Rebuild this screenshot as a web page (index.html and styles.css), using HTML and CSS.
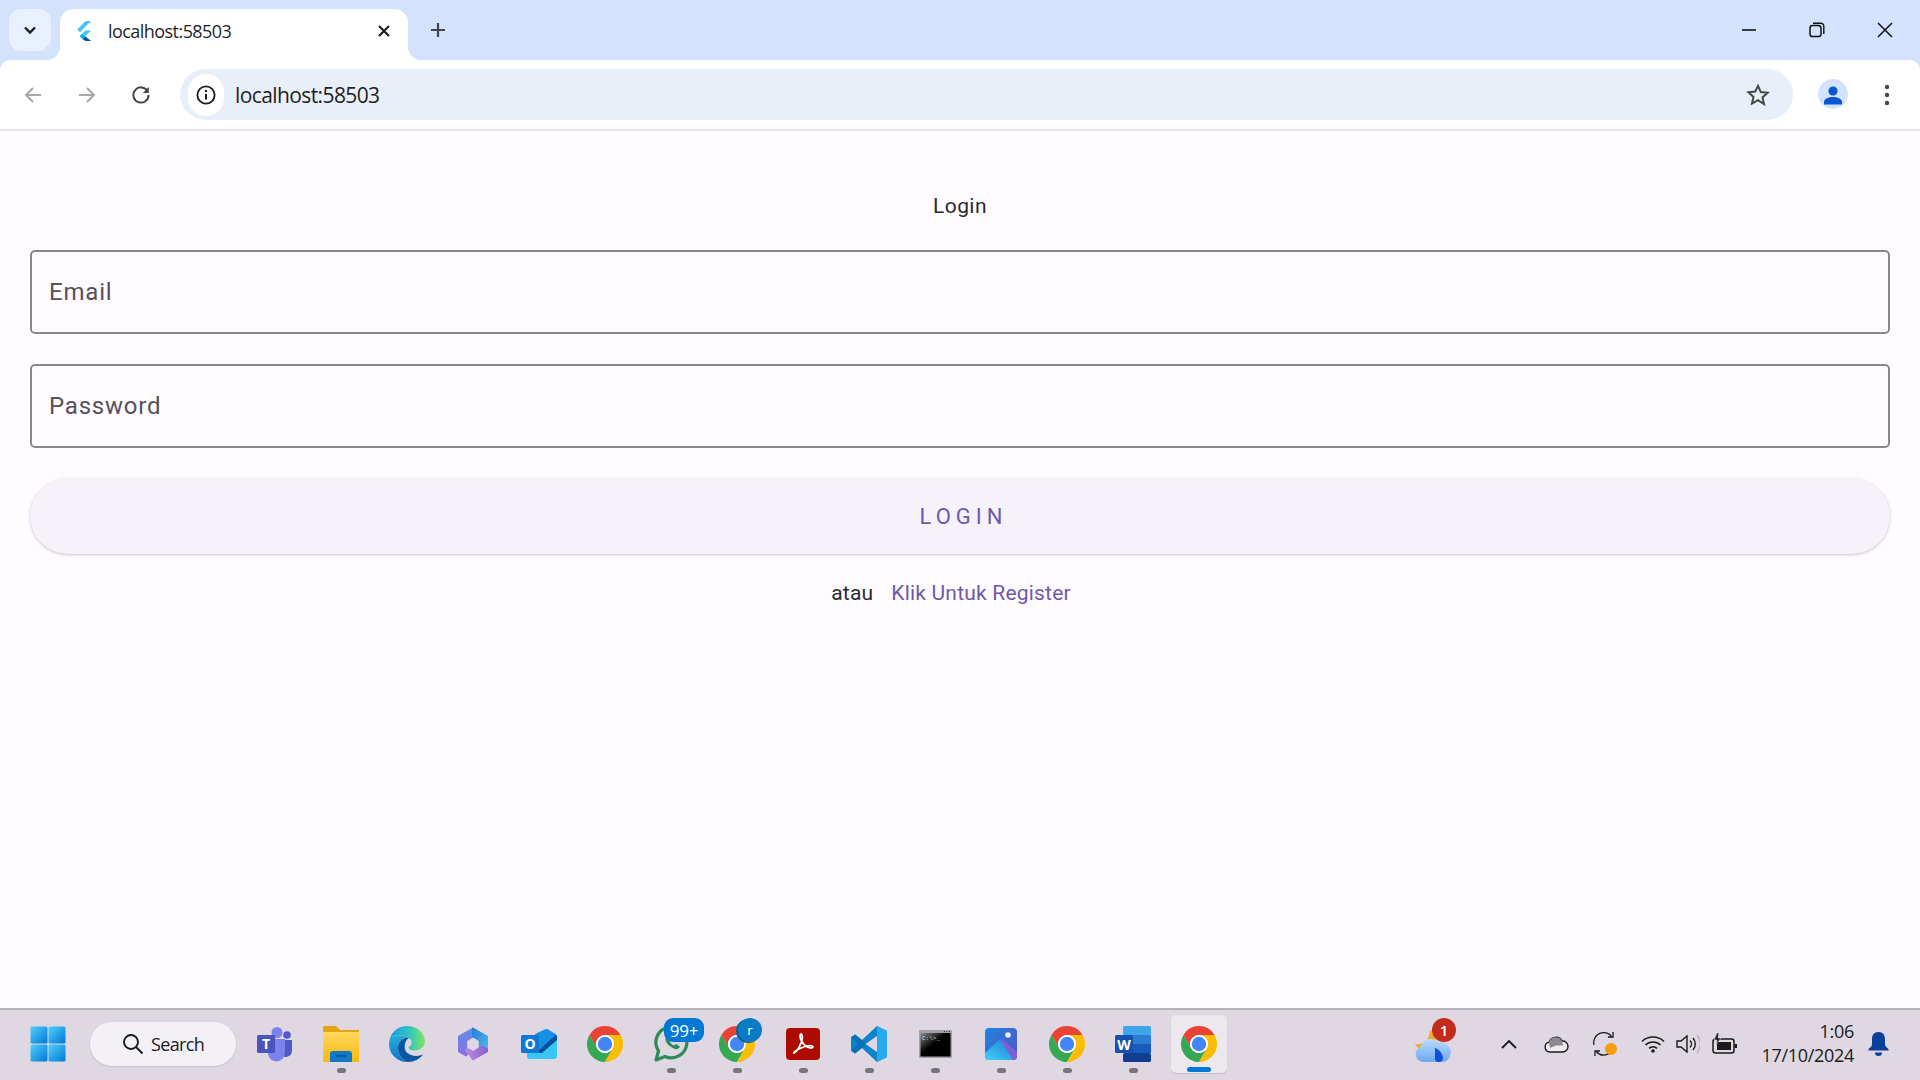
FILE: index.html
```html
<!DOCTYPE html>
<html lang="id">
<head>
<meta charset="utf-8">
<title>localhost:58503</title>
<link rel="stylesheet" href="styles.css">
</head>
<body>
<svg class="defs" width="0" height="0" aria-hidden="true">
  <defs>
    <symbol id="chrome" viewBox="4 4 40 40">
      <path fill="#ea4335" d="M24 4A20 20 0 0 1 41.32 14H24A10 10 0 0 0 15.34 29L6.68 14A20 20 0 0 1 24 4z"/>
      <path fill="#34a853" d="M6.68 14L15.34 29A10 10 0 0 0 32.66 29L24 44A20 20 0 0 1 6.68 14z"/>
      <path fill="#fbbc04" d="M41.32 14H24A10 10 0 0 1 32.66 29L24 44A20 20 0 0 0 41.32 14z"/>
      <circle cx="24" cy="24" r="10" fill="#fff"/>
      <circle cx="24" cy="24" r="8" fill="#4285f4"/>
    </symbol>
    <linearGradient id="winGrad" x1="0" y1="0" x2="1" y2="1">
      <stop offset="0" stop-color="#4fd0ff"/><stop offset="1" stop-color="#0078d4"/>
    </linearGradient>
    <linearGradient id="folderGrad" x1="0" y1="0" x2="0" y2="1">
      <stop offset="0" stop-color="#ffd75e"/><stop offset="1" stop-color="#fbb90f"/>
    </linearGradient>
    <linearGradient id="edgeTop" x1="0" y1="0" x2="1" y2="0">
      <stop offset="0" stop-color="#1c9bd8"/><stop offset=".55" stop-color="#2fc6c4"/><stop offset="1" stop-color="#82e55f"/>
    </linearGradient>
    <linearGradient id="edgeLeft" x1="0" y1="0" x2="0" y2="1">
      <stop offset="0" stop-color="#22b0d8"/><stop offset="1" stop-color="#0d74c8"/>
    </linearGradient>
    <linearGradient id="mLeft" x1="0" y1="0" x2="0" y2="1">
      <stop offset="0" stop-color="#5f8fe6"/><stop offset="1" stop-color="#8a6fdc"/>
    </linearGradient>
    <linearGradient id="mTop" x1="0" y1="0" x2="1" y2="1">
      <stop offset="0" stop-color="#2b7fd8"/><stop offset="1" stop-color="#4fb6e8"/>
    </linearGradient>
    <linearGradient id="mBottom" x1="0" y1="0" x2="1" y2="0">
      <stop offset="0" stop-color="#b88ae6"/><stop offset="1" stop-color="#8a5fd0"/>
    </linearGradient>
    <linearGradient id="photoGrad" x1="0" y1="0" x2="1" y2="1">
      <stop offset="0" stop-color="#1c86e0"/><stop offset="1" stop-color="#5a4fc0"/>
    </linearGradient>
    <linearGradient id="peakGrad" x1="0" y1="1" x2="1" y2="0">
      <stop offset="0" stop-color="#40d0f8"/><stop offset="1" stop-color="#1f7fdc"/>
    </linearGradient>
    <linearGradient id="cloudGrad" x1="0" y1="0" x2="0" y2="1">
      <stop offset="0" stop-color="#b9dcfb"/><stop offset="1" stop-color="#6fa8ee"/>
    </linearGradient>
    <linearGradient id="shine" x1="0" y1="0" x2="1" y2="1">
      <stop offset="0" stop-color="#8a8a8a"/><stop offset=".45" stop-color="#000"/>
    </linearGradient>
  </defs>
</svg>
<div class="window">
  <header class="tabstrip">
    <button class="tab-switch" aria-label="Search tabs">
      <svg width="14" height="9" viewBox="0 0 14 9"><path d="M2 1.500l5 5 5-5" fill="none" stroke="#1f1f1f" stroke-width="2.400"/></svg>
    </button>
    <div class="tab">
      <svg class="tab-fav" width="16" height="20" viewBox="0 0 16 20">
        <path fill="#47c5fb" d="M9.500 0h5.600L4 11.200 1.200 8.400z"/>
        <path fill="#47c5fb" d="M9.500 9.400h5.600L9.200 15.200 6.400 12.400z"/>
        <path fill="#00569e" d="M6.400 18l2.800-2.800 5.900 4.800H9.500z"/>
        <path fill="#00b5f8" d="M6.400 12.400l2.800 2.800-2.800 2.800-2.800-2.800z"/>
      </svg>
      <span class="tab-title">localhost:58503</span>
      <svg class="tab-close" width="14" height="14" viewBox="0 0 14 14"><path d="M2 2l10 10M12 2L2 12" stroke="#1f1f1f" stroke-width="2.200"/></svg>
    </div>
    <svg class="new-tab" width="18" height="18" viewBox="0 0 18 18"><path d="M9 2v14M2 9h14" stroke="#444746" stroke-width="2.200"/></svg>
    <div class="win-controls">
      <svg width="16" height="16" viewBox="0 0 16 16"><path d="M1 8h14" stroke="#111" stroke-width="1.600"/></svg>
      <svg width="16" height="16" viewBox="0 0 16 16"><rect x="1" y="3.600" width="11" height="11" rx="2.600" fill="none" stroke="#111" stroke-width="1.500"/><path d="M4 1.200h7.600A3 3 0 0 1 14.800 4.400V12" fill="none" stroke="#111" stroke-width="1.400"/></svg>
      <svg width="16" height="16" viewBox="0 0 16 16"><path d="M1 1l14 14M15 1L1 15" stroke="#111" stroke-width="1.500"/></svg>
    </div>
  </header>

  <nav class="toolbar">
    <svg class="tool-btn" width="20" height="20" viewBox="0 0 20 20"><path d="M18 10H3M10 3l-7 7 7 7" fill="none" stroke="#a7a8aa" stroke-width="2"/></svg>
    <svg class="tool-btn" width="20" height="20" viewBox="0 0 20 20"><path d="M2 10h15M10 3l7 7-7 7" fill="none" stroke="#a7a8aa" stroke-width="2"/></svg>
    <svg class="tool-btn" width="20" height="20" viewBox="0 0 20 20"><path d="M16.600 6.200A7.600 7.600 0 1 0 17.600 10" fill="none" stroke="#474747" stroke-width="2"/><path d="M17.800 2v6h-6z" fill="#474747"/></svg>
    <div class="omnibox">
      <span class="site-info">
        <svg width="20" height="20" viewBox="0 0 20 20"><circle cx="10" cy="10" r="8.600" fill="none" stroke="#1f1f1f" stroke-width="1.900"/><path d="M10 9v5.600" stroke="#1f1f1f" stroke-width="2"/><circle cx="10" cy="6" r="1.200" fill="#1f1f1f"/></svg>
      </span>
      <span class="url">localhost:58503</span>
      <svg class="star" width="24" height="24" viewBox="0 0 24 24"><path d="M12 2.800l2.800 6.300 6.800.7-5.100 4.600 1.500 6.700L12 17.100l-6 3.500 1.500-6.700-5.100-4.600 6.800-.7z" fill="none" stroke="#474747" stroke-width="2"/></svg>
    </div>
    <span class="avatar">
      <svg width="20" height="20" viewBox="0 0 20 20"><circle cx="10" cy="6" r="4.600" fill="#0b57d0"/><path d="M1 19.500v-2.600C1 13.600 6 12 10 12s9 1.600 9 4.900v2.600z" fill="#0b57d0"/></svg>
    </span>
    <svg class="menu-dots" width="6" height="22" viewBox="0 0 6 22"><circle cx="3" cy="3" r="2.200" fill="#474747"/><circle cx="3" cy="11" r="2.200" fill="#474747"/><circle cx="3" cy="19" r="2.200" fill="#474747"/></svg>
  </nav>

  <main class="page">
    <h1 class="page-title">Login</h1>
    <div class="field"><span class="field-label">Email</span></div>
    <div class="field"><span class="field-label">Password</span></div>
    <button class="login-btn">LOGIN</button>
    <div class="alt-row">
      <span class="alt-text">atau</span>
      <a class="alt-link">Klik Untuk Register</a>
    </div>
  </main>

  <footer class="taskbar">
    <div class="slot">
      <svg width="36" height="36" viewBox="0 0 36 36"><rect x="0.500" y="0.500" width="17" height="17" rx="1.500" fill="url(#winGrad)"/><rect x="18.500" y="0.500" width="17" height="17" rx="1.500" fill="url(#winGrad)"/><rect x="0.500" y="18.500" width="17" height="17" rx="1.500" fill="url(#winGrad)"/><rect x="18.500" y="18.500" width="17" height="17" rx="1.500" fill="url(#winGrad)"/></svg>
    </div>
    <div class="search-pill">
      <svg width="22" height="22" viewBox="0 0 22 22"><circle cx="9" cy="9" r="7" fill="none" stroke="#1a1a1a" stroke-width="1.900"/><path d="M14 14l6.500 6.500" stroke="#1a1a1a" stroke-width="2"/></svg>
      <span>Search</span>
    </div>
    <div class="apps">
      <div class="slot">
        <svg width="36" height="36" viewBox="0 0 36 36"><circle cx="20" cy="6.500" r="5.500" fill="#7b83eb"/><circle cx="30" cy="9" r="3.800" fill="#5059c9"/><path d="M23 14h12v11a6.500 6.500 0 0 1-12 3z" fill="#5059c9"/><path d="M11 13h17v14a8.500 8.500 0 0 1-17 0z" fill="#7b83eb"/><rect x="0" y="9" width="18" height="18" rx="1.500" fill="#4b53bc"/><text x="9" y="23" class="svg-t">T</text></svg>
      </div>
      <div class="slot has-dot">
        <svg width="36" height="36" viewBox="0 0 36 36"><path d="M0 2a2 2 0 0 1 2-2h11l4 4H36v8H0z" fill="#e2a50c"/><path d="M0 6h36v30H0z" fill="url(#folderGrad)"/><path d="M7 28a3 3 0 0 1 3-3h16a3 3 0 0 1 3 3v8H7z" fill="#0f78c8"/><path d="M13 30h10" stroke="#0b4f8c" stroke-width="1.500"/></svg>
      </div>
      <div class="slot">
        <svg width="36" height="36" viewBox="0 0 36 36">
          <path d="M1 12A18 18 0 0 1 18 0C28 0 36 7 36 15.500C36 21 31 24.500 26 24.500C22 24.500 19.500 23 19.500 21C23 20 24 15 20 12C14 8 5 9 1 12z" fill="url(#edgeTop)"/>
          <path d="M1 12C5 9 14 8 20 12C14 11 9 16 9 22C9 29 14 35 19 36A18 18 0 0 1 0 18C0 16 .4 14 1 12z" fill="url(#edgeLeft)"/>
          <path d="M20 12C14 11 9 16 9 22C9 29 14 35 19 36C25 36 31 33 34 28.500C31 30 26 30.500 22 29C16 27 15 22 16 18C16.500 15 18 13 20 12z" fill="#0b56a0"/>
        </svg>
      </div>
      <div class="slot">
        <svg width="32" height="34" viewBox="0 0 32 34">
          <path d="M16 1.500L2 9.500V24.500L9 28.500L16 17z" fill="url(#mLeft)" stroke="url(#mLeft)" stroke-width="2" stroke-linejoin="round"/>
          <path d="M16 1.500L30 9.500V22L16 17z" fill="url(#mTop)" stroke="url(#mTop)" stroke-width="2" stroke-linejoin="round"/>
          <path d="M9 23L16 17L30 22V24.500L16 32.500z" fill="url(#mBottom)" stroke="url(#mBottom)" stroke-width="2" stroke-linejoin="round"/>
          <path d="M16 11.500L21 14.500V20L16 23L11 20V14.500z" fill="#dfd8e2" stroke="#dfd8e2" stroke-width="1.500" stroke-linejoin="round"/>
        </svg>
      </div>
      <div class="slot">
        <svg width="36" height="30" viewBox="0 0 36 30">
          <path d="M15 5L24 .6C25 0 26 0 27 .6L34.500 5C35.500 5.700 36 7 36 8V27a3 3 0 0 1-3 3H9a3 3 0 0 1-3-3V20z" fill="#38c6f4"/>
          <path d="M14 5L25 0 27 .6 35 5.500 18 21H14z" fill="#1590e6"/>
          <path d="M18 21L35 5.500C35.700 6.400 36 7.500 36 8.500V11L21 24H18z" fill="#0a4f9e"/>
          <rect x="0" y="6" width="18" height="18" rx="1.500" fill="#0f78d4"/>
          <text x="9" y="20" class="svg-t">O</text>
        </svg>
      </div>
      <div class="slot"><svg width="36" height="36"><use href="#chrome"/></svg></div>
      <div class="slot has-dot">
        <svg width="37" height="36" viewBox="0 0 37 36"><path d="M3 34l2.500-9A15.500 15.500 0 1 1 12 30.500z" fill="none" stroke="#2e8b57" stroke-width="3.200" stroke-linejoin="round"/><path d="M13 11c-2 3 1 9 9 12 2 .7 4-.5 5-2.500l-4-2.500-2 1.500c-2-1-3.500-2.500-4.500-4.500l1.500-2-2-3.500z" fill="#2e8b57"/></svg>
        <span class="badge badge-count">99+</span>
      </div>
      <div class="slot has-dot">
        <svg width="36" height="36"><use href="#chrome"/></svg>
        <span class="badge badge-r">r</span>
      </div>
      <div class="slot has-dot">
        <svg width="34" height="32" viewBox="0 0 34 32"><rect width="34" height="32" rx="4" fill="#ad0b00"/><path d="M8 25c3-1 6-7 8-13 .8-3 0-6-1-6s-1.500 3 0 6c2 4 6 8 10 8 2 0 2.500-1.500 1-2-3-1-10 1-15 4-2 1.500-4 3-3 3z" fill="none" stroke="#fff" stroke-width="1.800"/></svg>
      </div>
      <div class="slot has-dot">
        <svg width="36" height="36" viewBox="0 0 36 36"><path d="M26 0l10 5v26l-10 5-15-14-7 5.500-4-3V11l4-2.500 7 5.500z" fill="#0b84ce"/><path d="M26 0l10 5v26l-10 5z" fill="#27aaf0"/><path d="M26 10L14.500 18 26 26z" fill="#dfd8e2"/><path d="M11 14l4 4-4 4-7 5.500-4-3 7-6.500-7-6.500 4-3z" fill="#0a70b8"/></svg>
      </div>
      <div class="slot has-dot">
        <svg width="33" height="28" viewBox="0 0 33 28"><rect width="33" height="28" rx="1" fill="#a2a2a6"/><rect x="1.500" y="3" width="30" height="23.500" fill="url(#shine)"/><path d="M25 1.500h1M27.500 1.500h1M30 1.500h1" stroke="#333" stroke-width="1"/><text x="3" y="10" class="svg-cmd">C:\&gt;_</text></svg>
      </div>
      <div class="slot has-dot">
        <svg width="32" height="32" viewBox="0 0 32 32"><rect width="32" height="32" rx="4" fill="url(#photoGrad)"/><circle cx="23" cy="7" r="2.800" fill="#e8eefc"/><path d="M15 12c1-1 2-1 3 0L32 24v4a4 4 0 0 1-4 4H20z" fill="#7f5fd4"/><path d="M0 25L13 13c1-1 2-1 3 0L28 32H4a4 4 0 0 1-4-4z" fill="url(#peakGrad)"/></svg>
      </div>
      <div class="slot has-dot"><svg width="36" height="36"><use href="#chrome"/></svg></div>
      <div class="slot has-dot">
        <svg width="36" height="36" viewBox="0 0 36 36"><rect x="8" y="0" width="28" height="9" rx="1.500" fill="#41a5ee"/><rect x="8" y="9" width="28" height="9" fill="#2b7cd3"/><rect x="8" y="18" width="28" height="9" fill="#185abd"/><rect x="8" y="27" width="28" height="9" rx="1.500" fill="#103f91"/><rect x="0" y="9" width="18" height="18" rx="1.500" fill="#1552ad"/><text x="9" y="23.500" class="svg-t">W</text></svg>
      </div>
      <div class="slot active">
        <svg width="36" height="36"><use href="#chrome"/></svg>
      </div>
    </div>

    <div class="tray">
      <div class="weather">
        <svg width="36" height="38" viewBox="0 0 36 38">
          <path d="M0 19C8 21 15 14 15 5C20 8 22 14 20 20L12 25C7 26 2 23 0 19z" fill="#f5ab2a"/>
          <path d="M8 37a8 8 0 0 1-2-15.500C7 16 12 13 17 14C20 14.500 23 16 24 18C26 16 31 17 33 21C36 23 36.500 28 35 31C33.500 35 30 37 27 37z" fill="url(#cloudGrad)"/>
          <path d="M20 23C24 24 28 29 28 33C28 36 25 37.500 23 37C21 37 20 35 20 34z" fill="#0f4fe0"/>
        </svg>
        <span class="badge badge-one">1</span>
      </div>
      <svg class="tray-chev" width="16" height="10" viewBox="0 0 16 10"><path d="M1 9l7-7 7 7" fill="none" stroke="#1a1a1a" stroke-width="1.800"/></svg>
      <svg class="tray-cloud" width="25" height="17" viewBox="0 0 25 17"><path d="M6 16a5 5 0 0 1-.8-9.900A7 7 0 0 1 18 5a5.500 5.500 0 0 1 1 11z" fill="#f2eff3" stroke="#1a1a1a" stroke-width="1.400"/><path d="M5 6.500A7 7 0 0 1 18 5l1 4.500H12L6 12z" fill="#8d8a8e"/></svg>
      <svg class="tray-sync" width="24" height="26" viewBox="0 0 24 26"><path d="M1 14A10 10 0 0 1 19 6M15 6h5V1" fill="none" stroke="#1a1a1a" stroke-width="1.300"/><path d="M21 14a10 10 0 0 1-18 6M7 20H2v5" fill="none" stroke="#1a1a1a" stroke-width="1.300"/><circle cx="18" cy="18" r="6" fill="#f59d0e"/></svg>
      <svg class="tray-wifi" width="24" height="18" viewBox="0 0 24 18"><path d="M1 6.500a16 16 0 0 1 22 0M4.500 10a11 11 0 0 1 15 0M8 13.400a6 6 0 0 1 8 0" fill="none" stroke="#1a1a1a" stroke-width="1.500"/><circle cx="12" cy="16" r="1.800" fill="#1a1a1a"/></svg>
      <svg class="tray-vol" width="24" height="20" viewBox="0 0 24 20"><path d="M1 7h4l6-5v16l-6-5H1z" fill="none" stroke="#1a1a1a" stroke-width="1.400"/><path d="M14 6.500a5 5 0 0 1 0 7M17 4a9 9 0 0 1 0 12" fill="none" stroke="#1a1a1a" stroke-width="1.400"/><path d="M21 1a14 14 0 0 1 0 18" fill="none" stroke="#b5b0b8" stroke-width="1.200"/></svg>
      <svg class="tray-batt" width="25" height="22" viewBox="0 0 25 22"><rect x="1" y="6" width="21" height="14" rx="2.500" fill="none" stroke="#1a1a1a" stroke-width="1.500"/><rect x="5" y="9" width="14" height="8" fill="#1a1a1a"/><rect x="22.500" y="11" width="2.500" height="4" fill="#1a1a1a"/><path d="M5 0L2 7h3l-1 5 5-7H6l1-5z" fill="#1a1a1a" stroke="#dfd8e2" stroke-width=".6"/></svg>
      <div class="clock"><span>1:06</span><span>17/10/2024</span></div>
      <svg class="tray-bell" width="21" height="24" viewBox="0 0 21 24"><path d="M10.500 0C6 0 4 3 4 7v5c0 2-1.500 3.500-3.500 5v1.500h20V17c-2-1.500-3.500-3-3.500-5V7c0-4-2-7-6.500-7z" fill="#0a3f9c"/><path d="M7 20.500h7a3.500 3.500 0 0 1-7 0z" fill="#0a3f9c"/></svg>
    </div>
  </footer>
</div>
</body>
</html>
```

FILE: styles.css
```css
* { box-sizing: border-box; }
html, body { margin: 0; padding: 0; height: 100%; overflow: hidden; }
.defs { position: absolute; }

.window {
  width: 1920px;
  height: 1080px;
  display: flex;
  flex-direction: column;
  background: #d3e3fd;
  font-family: "Open Sans", "Noto Sans", sans-serif;
}

/* Tab strip */
.tabstrip {
  height: 60px;
  flex: none;
  display: flex;
  align-items: flex-start;
  padding: 9px 0 0 9px;
  background: #d3e3fd;
}
.tab-switch {
  width: 42px;
  height: 42px;
  border: 0;
  padding: 0;
  border-radius: 12px;
  background: #e9f0fd;
  display: flex;
  align-items: center;
  justify-content: center;
}
.tab {
  position: relative;
  width: 348px;
  height: 51px;
  margin-left: 9px;
  background: #fff;
  border-radius: 14px 14px 0 0;
  display: flex;
  align-items: center;
  padding: 0 17px 8px 16px;
}
.tab::before, .tab::after {
  content: "";
  position: absolute;
  bottom: 0;
  width: 14px;
  height: 14px;
}
.tab::before { left: -14px; background: radial-gradient(circle at 0 0, #d3e3fd 14px, #fff 14.5px); }
.tab::after { right: -14px; background: radial-gradient(circle at 100% 0, #d3e3fd 14px, #fff 14.5px); }
.tab-fav { flex: none; }
.tab-title {
  margin-left: 16px;
  flex: 1;
  font-size: 18px;
  letter-spacing: -0.55px;
  color: #1f1f1f;
}
.new-tab { margin: 12px 0 0 21px; }
.win-controls {
  margin-left: auto;
  margin-top: 13px;
  display: flex;
  gap: 52px;
  padding-right: 27px;
}
.win-controls svg { display: block; }

/* Toolbar */
.toolbar {
  height: 71px;
  flex: none;
  display: flex;
  align-items: flex-start;
  padding: 9px 30px 0 0;
  background: #fff;
  border-bottom: 2px solid #e3e3e3;
  border-radius: 10px 10px 0 0;
}
.tool-btn { flex: none; margin: 16px 0 0 23px; }
.toolbar .tool-btn + .tool-btn { margin-left: 34px; }
.omnibox {
  flex: 1;
  height: 51px;
  margin-left: 29px;
  border-radius: 26px;
  background: #e9eff9;
  display: flex;
  align-items: center;
  padding: 0 23px 0 8px;
}
.site-info {
  width: 36px;
  height: 42px;
  border-radius: 21px;
  background: #fff;
  display: flex;
  align-items: center;
  justify-content: center;
}
.url {
  margin-left: 11px;
  flex: 1;
  font-size: 21px;
  letter-spacing: -0.6px;
  color: #1f1f1f;
}
.avatar {
  width: 30px;
  height: 30px;
  margin: 10px 0 0 25px;
  border-radius: 50%;
  background: #d3e3fd;
  display: flex;
  align-items: center;
  justify-content: center;
  overflow: hidden;
}
.avatar svg { margin-top: 2px; }
.menu-dots { margin: 15px 0 0 36px; flex: none; }

/* Page */
.page {
  flex: 1;
  display: flex;
  flex-direction: column;
  padding: 60px 30px 0;
  background: #fffbff;
  font-family: Roboto, sans-serif;
}
.page-title {
  margin: 0 0 29px;
  height: 30px;
  line-height: 30px;
  text-align: center;
  font-size: 21px;
  font-weight: 400;
  letter-spacing: 0.4px;
  color: #2b292f;
}
.field {
  height: 84px;
  margin-bottom: 30px;
  border: 2px solid #8b8790;
  border-radius: 5px;
  display: flex;
  align-items: center;
  padding-left: 17px;
}
.field-label {
  font-size: 24px;
  letter-spacing: 0.8px;
  color: #55515b;
}
.login-btn {
  height: 76px;
  flex: none;
  border: 0;
  padding: 0 0 0 7px;
  border-radius: 38px;
  background: #f6f2f9;
  box-shadow: 0 1px 3px rgba(0, 0, 0, 0.22);
  font-family: Roboto, sans-serif;
  font-size: 22px;
  letter-spacing: 5px;
  color: #6f59ab;
}
.alt-row {
  margin-top: 24px;
  height: 30px;
  display: flex;
  justify-content: center;
  align-items: center;
  gap: 18px;
  padding: 0 18px 0 0;
  font-size: 21px;
  letter-spacing: 0.2px;
}
.alt-text { color: #2b292f; }
.alt-link { color: #6f59ab; }

/* Taskbar */
.taskbar {
  height: 72px;
  flex: none;
  display: flex;
  align-items: center;
  padding: 0 0 2px 15px;
  background: #dfd8e2;
  border-top: 2px solid #b6b1b8;
}
.slot {
  position: relative;
  width: 66px;
  height: 58px;
  flex: none;
  display: flex;
  align-items: center;
  justify-content: center;
}
.slot svg { display: block; }
.slot.has-dot::after {
  content: "";
  position: absolute;
  left: 50%;
  bottom: 0;
  width: 9px;
  height: 5px;
  margin-left: -4px;
  border-radius: 3px;
  background: #787579;
}
.slot.active::before {
  content: "";
  position: absolute;
  left: 5px;
  right: 5px;
  top: 0;
  bottom: 0;
  border-radius: 5px;
  background: #ece8ee;
  box-shadow: 0 1px 1px rgba(0, 0, 0, 0.12);
}
.slot.active svg { position: relative; }
.slot.active::after {
  content: "";
  position: absolute;
  left: 21px;
  bottom: 1px;
  width: 24px;
  height: 5px;
  border-radius: 3px;
  background: #0078d4;
}
.search-pill {
  width: 146px;
  height: 44px;
  flex: none;
  margin: 0 6px 0 9px;
  border-radius: 22px;
  background: #f3f1f5;
  box-shadow: 0 1px 2px rgba(0, 0, 0, 0.12);
  display: flex;
  align-items: center;
  gap: 7px;
  padding-left: 32px;
  font-size: 18px;
  letter-spacing: -0.65px;
  color: #1a1a1a;
}
.apps { display: flex; }
.badge {
  position: absolute;
  color: #fff;
  display: flex;
  align-items: center;
  justify-content: center;
}
.badge-count {
  left: 26px;
  top: 3px;
  width: 40px;
  height: 24px;
  border-radius: 9px;
  background: #0078d4;
  font-size: 17px;
  letter-spacing: -0.3px;
}
.badge-r {
  left: 34px;
  top: 3px;
  width: 24px;
  height: 24px;
  border-radius: 50%;
  background: #0a7cc4;
  box-shadow: -2px 1px 0 #0c5f98;
  font-size: 13px;
}
.svg-t {
  font-family: "Open Sans", sans-serif;
  font-size: 14px;
  font-weight: 700;
  fill: #fff;
  text-anchor: middle;
}
.svg-cmd {
  font-family: "Liberation Mono", monospace;
  font-size: 6px;
  fill: #ddd;
}

/* Tray */
.tray {
  margin-left: auto;
  display: flex;
  align-items: center;
  padding-right: 31px;
  height: 100%;
}
.tray svg { display: block; flex: none; }
.weather { position: relative; width: 40px; height: 38px; }
.badge-one {
  left: 17px;
  top: -7px;
  width: 24px;
  height: 24px;
  border-radius: 50%;
  background: #c42b1c;
  font-size: 15px;
  font-weight: 600;
}
.tray-chev { margin-left: 46px; }
.tray-cloud { margin-left: 27px; }
.tray-sync { margin-left: 24px; }
.tray-wifi { margin-left: 24px; }
.tray-vol { margin-left: 11px; }
.tray-batt { margin-left: 12px; }
.clock {
  width: 117px;
  display: flex;
  flex-direction: column;
  align-items: flex-end;
  margin-top: -2px;
  font-size: 18px;
  line-height: 24px;
  letter-spacing: -0.3px;
  color: #1a1a1a;
}
.tray-bell { margin-left: 14px; }
```
